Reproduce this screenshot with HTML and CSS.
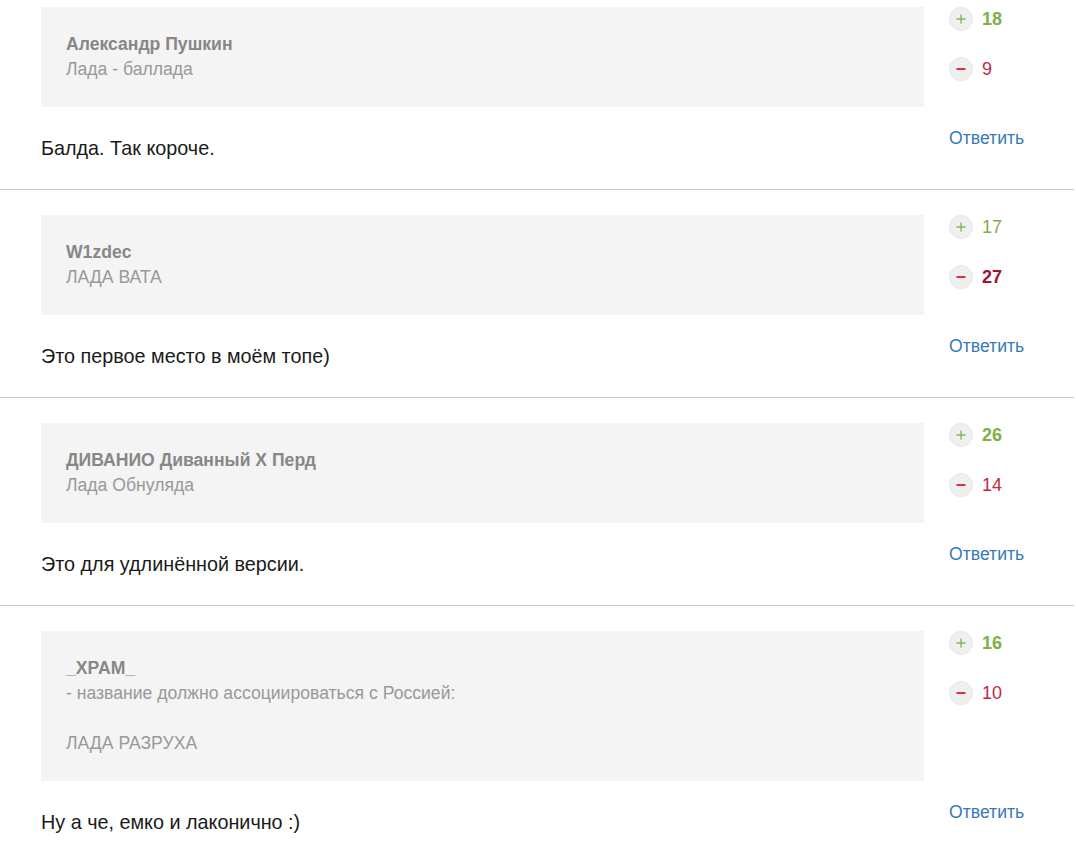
FILE: index.html
```html
<!DOCTYPE html>
<html lang="ru">
<head>
<meta charset="utf-8">
<link rel="stylesheet" href="styles.css">
</head>
<body>
<div class="comments">
  <div class="comment">
    <div class="main">
      <div class="quote">
        <div class="q-author">Александр Пушкин</div>
        <div class="q-text">Лада - баллада</div>
      </div>
      <div class="text">Балда. Так короче.</div>
    </div>
    <div class="side">
      <div class="vote"><span class="btn plus"><svg viewBox="0 0 12 12"><path d="M6 1.5v9M1.5 6h9"/></svg></span><span class="num pos strong">18</span></div>
      <div class="vote"><span class="btn minus"><svg viewBox="0 0 12 12"><path d="M1.5 6h9"/></svg></span><span class="num neg">9</span></div>
      <a class="reply">Ответить</a>
    </div>
  </div>
  <div class="comment">
    <div class="main">
      <div class="quote">
        <div class="q-author">W1zdec</div>
        <div class="q-text">ЛАДА ВАТА</div>
      </div>
      <div class="text">Это первое место в моём топе)</div>
    </div>
    <div class="side">
      <div class="vote"><span class="btn plus"><svg viewBox="0 0 12 12"><path d="M6 1.5v9M1.5 6h9"/></svg></span><span class="num pos">17</span></div>
      <div class="vote"><span class="btn minus"><svg viewBox="0 0 12 12"><path d="M1.5 6h9"/></svg></span><span class="num neg strong">27</span></div>
      <a class="reply">Ответить</a>
    </div>
  </div>
  <div class="comment">
    <div class="main">
      <div class="quote">
        <div class="q-author">ДИВАНИО Диванный Х Перд</div>
        <div class="q-text">Лада Обнуляда</div>
      </div>
      <div class="text">Это для удлинённой версии.</div>
    </div>
    <div class="side">
      <div class="vote"><span class="btn plus"><svg viewBox="0 0 12 12"><path d="M6 1.5v9M1.5 6h9"/></svg></span><span class="num pos strong">26</span></div>
      <div class="vote"><span class="btn minus"><svg viewBox="0 0 12 12"><path d="M1.5 6h9"/></svg></span><span class="num neg">14</span></div>
      <a class="reply">Ответить</a>
    </div>
  </div>
  <div class="comment">
    <div class="main">
      <div class="quote">
        <div class="q-author">_XPAM_</div>
        <div class="q-text">- название должно ассоциироваться с Россией:<br><br>ЛАДА РАЗРУХА</div>
      </div>
      <div class="text">Ну а че, емко и лаконично :)</div>
    </div>
    <div class="side">
      <div class="vote"><span class="btn plus"><svg viewBox="0 0 12 12"><path d="M6 1.5v9M1.5 6h9"/></svg></span><span class="num pos strong">16</span></div>
      <div class="vote"><span class="btn minus"><svg viewBox="0 0 12 12"><path d="M1.5 6h9"/></svg></span><span class="num neg">10</span></div>
      <a class="reply">Ответить</a>
    </div>
  </div>
</div>
</body>
</html>
```

FILE: styles.css
```css
html, body {
  margin: 0;
  padding: 0;
  background: #fff;
}
body {
  font-family: "Liberation Sans", Arial, sans-serif;
  width: 1076px;
}
.comments {
  width: 1074px;
}
.comment {
  display: flex;
  gap: 25px;
  padding: 25px 0 29px 41px;
  border-bottom: 1px solid #c8c8c8;
}
.comment:first-child {
  padding-top: 7px;
}
.main {
  width: 883px;
  flex: none;
}
.quote {
  background: #f4f4f4;
  padding: 25px 25px;
  font-size: 17.6px;
  line-height: 25px;
}
.q-author {
  font-weight: bold;
  color: #878787;
}
.q-text {
  color: #999;
}
.text {
  margin-top: 29px;
  font-size: 19.8px;
  line-height: 24px;
  color: #1a1a1a;
}
.side {
  display: flex;
  flex-direction: column;
  align-items: flex-start;
}
.vote {
  display: flex;
  align-items: center;
  height: 24px;
  gap: 9px;
  margin-bottom: 26px;
}
.btn {
  width: 24px;
  height: 24px;
  box-sizing: border-box;
  border-radius: 50%;
  background: #efefef;
  border: 1px solid #e6e6e6;
  display: flex;
  align-items: center;
  justify-content: center;
}
.btn svg {
  width: 12px;
  height: 12px;
  fill: none;
  stroke-linecap: butt;
}
.plus svg { stroke: #86b654; stroke-width: 1.4; }
.minus svg { stroke: #d8343f; stroke-width: 2; }
.num {
  font-size: 18px;
  line-height: 24px;
}
.num.pos { color: #7fae47; }
.num.neg { color: #c3283d; }
.num.strong { font-weight: bold; }
.num.neg.strong { color: #a0112c; }
.reply {
  margin-top: auto;
  margin-bottom: 10px;
  font-size: 17.6px;
  line-height: 24px;
  color: #3a78b8;
  cursor: pointer;
}
```
